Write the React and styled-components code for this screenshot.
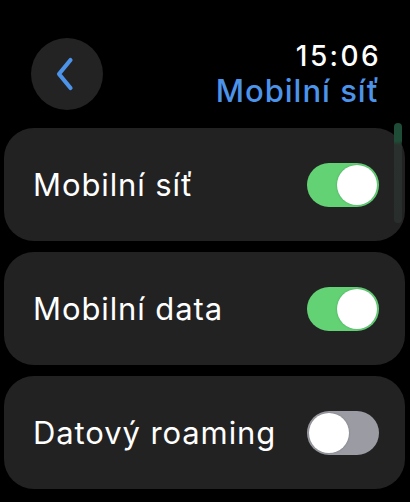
import React, { useState } from "react";
import styled, { createGlobalStyle } from "styled-components";

const GlobalStyle = createGlobalStyle`
  html, body {
    margin: 0;
    padding: 0;
    background: #000;
  }
  body {
    font-family: Inter, "Open Sans", "Noto Sans", sans-serif;
    -webkit-font-smoothing: antialiased;
  }
`;

const Screen = styled.div`
  position: relative;
  width: 410px;
  height: 502px;
  background: #000;
  overflow: hidden;
  box-sizing: border-box;
  padding-top: 38px;
`;

const Header = styled.div`
  display: flex;
  justify-content: space-between;
  align-items: flex-start;
  padding: 0 31px 0 31px;
  height: 72px;
`;

const BackButton = styled.button`
  width: 72px;
  height: 72px;
  border-radius: 50%;
  border: none;
  background: #232323;
  display: flex;
  align-items: center;
  justify-content: center;
  padding: 0;
  padding-right: 4px;
  cursor: pointer;
`;

const TitleBlock = styled.div`
  display: flex;
  flex-direction: column;
  align-items: flex-end;
`;

const Time = styled.div`
  color: #fff;
  font-size: 28px;
  font-weight: 500;
  line-height: 32px;
  margin-top: 2px;
  letter-spacing: 2.4px;
  margin-right: -2px;
`;

const Title = styled.div`
  color: #4c93ea;
  font-size: 31px;
  font-weight: 500;
  line-height: 36px;
  margin-top: 1px;
  letter-spacing: 1px;
  margin-right: -1px;
`;

const List = styled.div`
  display: flex;
  flex-direction: column;
  gap: 11px;
  padding: 0 5px 0 4px;
  margin-top: 18px;
`;

const Card = styled.div`
  height: 113px;
  border-radius: 30px;
  background: #222222;
  display: flex;
  align-items: center;
  justify-content: space-between;
  padding: 0 26px 0 29px;
  box-sizing: border-box;
`;

const Label = styled.span`
  color: #fff;
  font-size: 31px;
  font-weight: 400;
  letter-spacing: 0.9px;
`;

const Track = styled.button`
  position: relative;
  width: 72px;
  height: 44px;
  border-radius: 22px;
  border: none;
  padding: 0;
  background: ${(p) => (p.$on ? "#62d275" : "#9b9ca3")};
  cursor: pointer;
  flex-shrink: 0;
`;

const Knob = styled.span`
  position: absolute;
  top: 2px;
  left: ${(p) => (p.$on ? "30px" : "2px")};
  width: 40px;
  height: 40px;
  border-radius: 50%;
  background: #fff;
  box-shadow: 0 0 2px rgba(0, 0, 0, 0.25);
`;

const ScrollIndicator = styled.div`
  position: absolute;
  left: 394px;
  top: 123px;
  width: 8px;
  height: 100px;
  border-radius: 4px;
  background: linear-gradient(
    to bottom,
    #1e4c37 0px,
    #1e4c37 18px,
    rgba(70, 100, 85, 0.22) 22px,
    rgba(70, 100, 85, 0.18) 100%
  );
`;

const Toggle = ({ on, onClick }) => (
  <Track $on={on} onClick={onClick} aria-pressed={on}>
    <Knob $on={on} />
  </Track>
);

export default function App() {
  const [items, setItems] = useState([
    { label: "Mobilní síť", on: true },
    { label: "Mobilní data", on: true },
    { label: "Datový roaming", on: false },
  ]);

  const toggle = (i) =>
    setItems((prev) =>
      prev.map((it, idx) => (idx === i ? { ...it, on: !it.on } : it))
    );

  return (
    <>
      <GlobalStyle />
      <Screen>
        <Header>
          <BackButton aria-label="Zpět">
            <svg width="20" height="34" viewBox="0 0 20 34" fill="none">
              <path
                d="M15.5 3 L4 17 L15.5 31"
                stroke="#4c93ea"
                strokeWidth="4.2"
                strokeLinecap="round"
                strokeLinejoin="round"
              />
            </svg>
          </BackButton>
          <TitleBlock>
            <Time>15:06</Time>
            <Title>Mobilní síť</Title>
          </TitleBlock>
        </Header>
        <List>
          {items.map((it, i) => (
            <Card key={it.label}>
              <Label>{it.label}</Label>
              <Toggle on={it.on} onClick={() => toggle(i)} />
            </Card>
          ))}
        </List>
        <ScrollIndicator />
      </Screen>
    </>
  );
}
